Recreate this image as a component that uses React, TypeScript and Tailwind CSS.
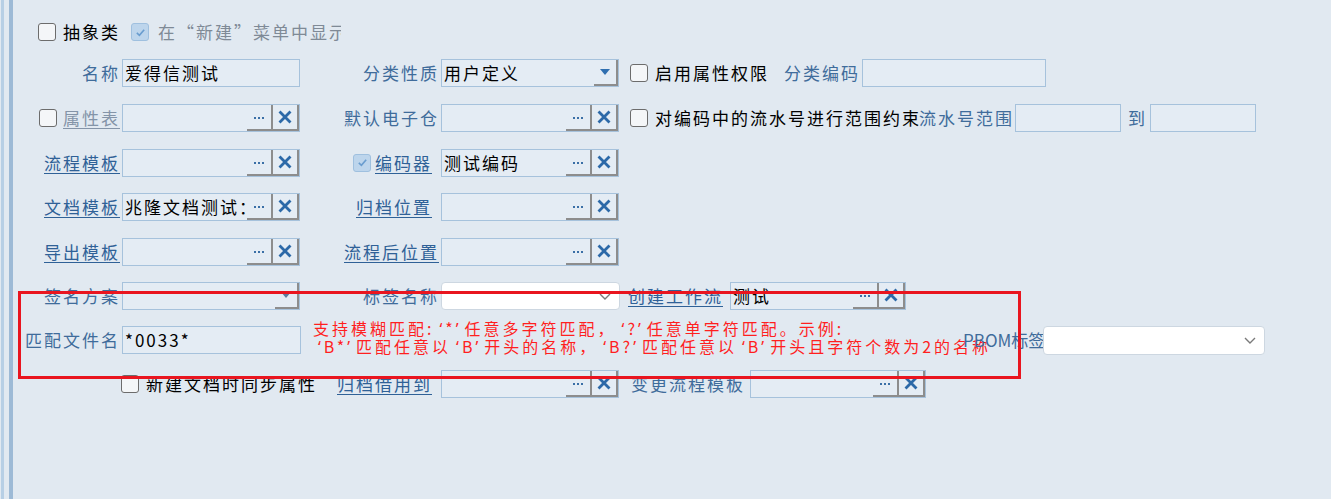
import React from 'react';

const LBL = 'text-[#3f6c9b]';
const LINK = 'text-[#2f6197] underline underline-offset-[3px] decoration-[1px]';

function Box({ checked, className = '' }: { checked?: boolean; className?: string }) {
  if (checked) {
    return (
      <span className={`flex h-[18px] w-[18px] shrink-0 items-center justify-center rounded-[3px] border border-[#9fc0df] bg-[#bdd5ec] ${className}`}>
        <svg viewBox="0 0 12 12" className="h-[11px] w-[11px]">
          <path d="M2 6.5 L4.8 9 L10 3" fill="none" stroke="#6a9dcf" strokeWidth="1.8" />
        </svg>
      </span>
    );
  }
  return <span className={`block h-[18px] w-[18px] shrink-0 rounded-[3px] border-[1.5px] border-[#6c6c6c] bg-[#f4f6f8] ${className}`} />;
}

function Dots() {
  return (
    <span className="flex gap-[2px] pt-[2px]">
      <span className="h-[2px] w-[2px] bg-[#3a6fa6]" />
      <span className="h-[2px] w-[2px] bg-[#3a6fa6]" />
      <span className="h-[2px] w-[2px] bg-[#3a6fa6]" />
    </span>
  );
}

function Cross() {
  return (
    <svg viewBox="0 0 14 14" className="h-[14px] w-[14px]">
      <path d="M2.5 2.5 L11.5 11.5 M11.5 2.5 L2.5 11.5" stroke="#2c69a8" strokeWidth="2.8" strokeLinecap="square" />
    </svg>
  );
}

function Field({ value, w, btns = true }: { value?: string; w: string; btns?: boolean }) {
  return (
    <div className={`flex h-[28px] shrink-0 border border-[#a6c2dc] bg-[#e4ecf4] ${w}`}>
      <div className="min-w-0 flex-1 overflow-hidden whitespace-nowrap pl-[2px] leading-[25px] text-black">{value}</div>
      {btns && (
        <>
          <div className="flex w-[26px] shrink-0 items-center justify-center border-r-2 border-b-2 border-[#8d8d8d]">
            <Dots />
          </div>
          <div className="flex w-[26px] shrink-0 items-center justify-center border-r-2 border-b-2 border-[#8d8d8d]">
            <Cross />
          </div>
        </>
      )}
    </div>
  );
}

function OldSelect({ value, w, dim }: { value?: string; w: string; dim?: boolean }) {
  return (
    <div className={`flex h-[28px] shrink-0 border border-[#a6c2dc] bg-[#e4ecf4] ${w}`}>
      <div className="min-w-0 flex-1 overflow-hidden whitespace-nowrap pl-[2px] leading-[25px] text-black">{value}</div>
      <div className="flex w-[24px] shrink-0 items-center justify-center border-r-2 border-b-2 border-[#8d8d8d]">
        <svg viewBox="0 0 10 6" className="h-[6px] w-[10px]">
          <path d="M0 0 L10 0 L5 6 Z" fill={dim ? '#5b7b9c' : '#2f6fb0'} />
        </svg>
      </div>
    </div>
  );
}

function NewSelect({ w, h }: { w: string; h: string }) {
  return (
    <div className={`flex shrink-0 items-center justify-end rounded-[4px] border border-[#cdd7e1] bg-white pr-[8px] ${w} ${h}`}>
      <svg viewBox="0 0 12 7" className="h-[7px] w-[12px]">
        <path d="M1 1 L6 6 L11 1" fill="none" stroke="#7a7a7a" strokeWidth="1.4" />
      </svg>
    </div>
  );
}

// slim quotes with a gap on the outer side, as in the hint text
function Lq() {
  return <span className="pl-[5px] font-['Noto_Sans',sans-serif]">‘</span>;
}
function Rq() {
  return <span className="pr-[3px] font-['Noto_Sans',sans-serif]">’</span>;
}

export default function App() {
  return (
    <div
      lang="zh-CN"
      className="relative flex h-[499px] w-[1331px] overflow-hidden bg-[#e1e9f1] font-['Noto_Sans_CJK_SC','Noto_Sans',sans-serif] text-[17px] tracking-[2px] text-black"
    >
      {/* panel edges */}
      <div className="w-[1px] shrink-0" />
      <div className="w-[3px] shrink-0 bg-[#b7cfe5]" />
      <div className="w-[5px] shrink-0" />
      <div className="w-[4px] shrink-0 bg-[#9dbad6]" />

      <div className="flex flex-1 flex-col pt-[13px]">
        {/* row 0 */}
        <div className="flex h-[38px] items-center pl-[25px]">
          <Box />
          <span className="ml-[7px] w-[60px] shrink-0">抽象类</span>
          <Box checked className="ml-[8px]" />
          <span className="ml-[9px] w-[183px] shrink-0 overflow-hidden whitespace-nowrap text-[#7f8a96]">在“新建”菜单中显示</span>
        </div>

        {/* row 1 */}
        <div className="flex h-[44px] items-center">
          <span className={`w-[107px] shrink-0 text-right ${LBL}`}>名称</span>
          <div className="ml-[2px]"><Field w="w-[178px]" value="爱得信测试" btns={false} /></div>
          <span className={`w-[139px] shrink-0 text-right ${LBL}`}>分类性质</span>
          <div className="ml-[2px]"><OldSelect w="w-[178px]" value="用户定义" /></div>
          <Box className="ml-[11px]" />
          <span className="ml-[7px] w-[116px] shrink-0 whitespace-nowrap">启用属性权限</span>
          <span className={`w-[89px] shrink-0 text-right ${LBL}`}>分类编码</span>
          <div className="ml-[2px]"><Field w="w-[184px]" btns={false} /></div>
        </div>

        {/* row 2 */}
        <div className="flex h-[45px] items-center">
          <span className="flex w-[107px] shrink-0 items-center justify-end gap-[6px]">
            <Box />
            <span className="text-[#8494a8] underline underline-offset-[3px] decoration-[1px]">属性表</span>
          </span>
          <div className="ml-[2px]"><Field w="w-[178px]" /></div>
          <span className={`w-[139px] shrink-0 text-right ${LBL}`}>默认电子仓</span>
          <div className="ml-[2px]"><Field w="w-[178px]" /></div>
          <Box className="ml-[11px]" />
          <span className="ml-[7px] w-[263px] shrink-0 whitespace-nowrap">对编码中的流水号进行范围约束</span>
          <span className={`w-[96px] shrink-0 whitespace-nowrap text-right ${LBL}`}>流水号范围</span>
          <div className="ml-[1px]"><Field w="w-[106px]" btns={false} /></div>
          <span className={`ml-[7px] w-[22px] shrink-0 ${LBL}`}>到</span>
          <div><Field w="w-[106px]" btns={false} /></div>
        </div>

        {/* row 3 */}
        <div className="flex h-[45px] items-center">
          <span className={`w-[107px] shrink-0 text-right ${LINK}`}>流程模板</span>
          <div className="ml-[2px]"><Field w="w-[178px]" /></div>
          <span className="flex w-[139px] shrink-0 items-center justify-end gap-[4px] pr-[7px]">
            <Box checked />
            <span className={LINK}>编码器</span>
          </span>
          <div className="ml-[2px]"><Field w="w-[178px]" value="测试编码" /></div>
        </div>

        {/* row 4 */}
        <div className="flex h-[44px] items-center">
          <span className={`w-[107px] shrink-0 text-right ${LINK}`}>文档模板</span>
          <div className="ml-[2px]"><Field w="w-[178px]" value="兆隆文档测试：模板" /></div>
          <span className={`w-[139px] shrink-0 pr-[7px] text-right ${LINK}`}>归档位置</span>
          <div className="ml-[2px]"><Field w="w-[178px]" /></div>
        </div>

        {/* row 5 */}
        <div className="flex h-[45px] items-center">
          <span className={`w-[107px] shrink-0 text-right ${LINK}`}>导出模板</span>
          <div className="ml-[2px]"><Field w="w-[178px]" /></div>
          <span className={`w-[139px] shrink-0 text-right ${LINK}`}>流程后位置</span>
          <div className="ml-[2px]"><Field w="w-[178px]" /></div>
        </div>

        {/* row 6 */}
        <div className="flex h-[44px] items-center">
          <span className={`w-[107px] shrink-0 text-right ${LBL}`}>签名方案</span>
          <div className="ml-[2px]"><OldSelect w="w-[178px]" dim /></div>
          <span className={`w-[139px] shrink-0 text-right ${LBL}`}>标签名称</span>
          <div className="ml-[2px]"><NewSelect w="w-[179px]" h="h-[28px]" /></div>
          <span className={`ml-[8px] w-[97px] shrink-0 whitespace-nowrap ${LINK}`}>创建工作流</span>
          <div className="ml-[5px]"><Field w="w-[176px]" value="测试" /></div>
        </div>

        {/* row 7 */}
        <div className="flex h-[44px] items-center">
          <span className={`w-[107px] shrink-0 whitespace-nowrap text-right ${LBL}`}>匹配文件名</span>
          <div className="ml-[2px]"><Field w="w-[179px]" value="*0033*" btns={false} /></div>
          <div className="ml-[12px] w-[650px] shrink-0 whitespace-nowrap pb-[5px] text-[16px] leading-[17px] tracking-[3px] text-[#ff1f1f]">
            <div>
              支持模糊匹配:<Lq />*<Rq />任意多字符匹配，<Lq />?<Rq />任意单字符匹配。示例:
            </div>
            <div>
              <Lq />B*<Rq />匹配任意以<Lq />B<Rq />开头的名称，<Lq />B?<Rq />匹配任意以<Lq />B<Rq />开头且字符个数为2的名称
            </div>
          </div>
          <span className={`w-[79px] shrink-0 whitespace-nowrap text-right tracking-[0px] ${LBL}`}>PBOM标签</span>
          <div className="ml-[1px]"><NewSelect w="w-[222px]" h="h-[29px]" /></div>
        </div>

        {/* row 8 */}
        <div className="flex h-[44px] items-center">
          <span className="w-[107px] shrink-0" />
          <span className="ml-[1px] flex w-[179px] shrink-0 items-center gap-[7px]">
            <Box />
            <span className="whitespace-nowrap">新建文档时同步属性</span>
          </span>
          <span className={`w-[139px] shrink-0 whitespace-nowrap pr-[7px] text-right ${LINK}`}>归档借用到</span>
          <div className="ml-[2px]"><Field w="w-[178px]" /></div>
          <span className={`ml-[12px] w-[116px] shrink-0 whitespace-nowrap ${LBL}`}>变更流程模板</span>
          <div className="ml-[3px]"><Field w="w-[176px]" /></div>
        </div>
      </div>

      {/* red highlight frame drawn over the form */}
      <div className="pointer-events-none absolute left-[18px] top-[291px] h-[88px] w-[1003px] border-[3px] border-[#e9151f]" />
    </div>
  );
}
